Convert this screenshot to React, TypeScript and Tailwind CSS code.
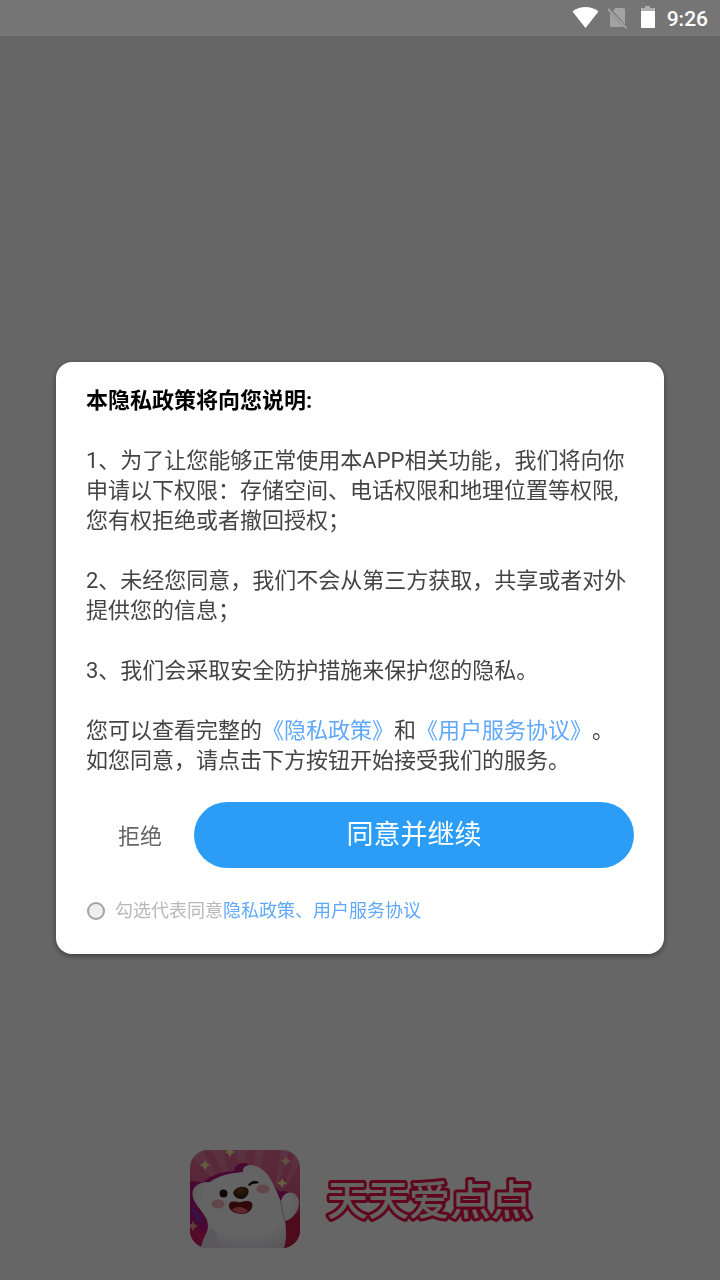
import { useState } from 'react';

function StatusBar() {
  return (
    <header className="relative z-20 flex h-9 items-center justify-end bg-[#757575] pr-3 text-white">
      {/* Wifi */}
      <svg className="mr-2 h-6 w-7" viewBox="0 0 28 24" fill="currentColor">
        <path d="M14.500 22 1.500 5.500C5 2.500 9.500 1 14.500 1s9.500 1.500 13 4.500Z" />
      </svg>
      {/* No SIM */}
      <svg className="mr-3 h-6 w-5" viewBox="0 0 20 24">
        <path fill="#a3a3a3" d="M8.500 2H16.500q1.500 0 1.500 1.500v14.700L6 5ZM3 7 16.500 21H4.500Q3 21 3 19.500Z" />
        <path stroke="#a3a3a3" strokeWidth="1.800" d="M1 3 19.500 22" />
      </svg>
      {/* Battery */}
      <svg className="mr-3 h-6 w-4" viewBox="0 0 16 24">
        <path fill="#b0b0b0" d="M6 0h5v2h5v4H2V2h4Z" />
        <path fill="currentColor" d="M2 5h14v17H2Z" />
      </svg>
      <span className="pt-px text-[21px] leading-6 font-medium">9:26</span>
    </header>
  );
}

function BearLogo() {
  return (
    <svg className="h-[98px] w-[110px] rounded-[18px]" viewBox="0 0 110 98">
      <defs>
        <linearGradient id="sky" x1="0" y1="0" x2="0" y2="1">
          <stop offset="0" stopColor="#e06a94" />
          <stop offset="0.400" stopColor="#dc5c88" />
          <stop offset="0.650" stopColor="#cc3562" />
          <stop offset="1" stopColor="#b81640" />
        </linearGradient>
        <radialGradient id="fur" cx="0.500" cy="0.450" r="0.620">
          <stop offset="0.650" stopColor="#fafafa" />
          <stop offset="1" stopColor="#dcd8e0" />
        </radialGradient>
        <radialGradient id="nose" cx="0.500" cy="0.300" r="0.700">
          <stop offset="0" stopColor="#74481f" />
          <stop offset="1" stopColor="#2d1608" />
        </radialGradient>
        <path id="spark" d="M0-5.500Q.9-.9 5.500 0 .9.900 0 5.500-.9.900-5.500 0-.9-.9 0-5.500Z" />
      </defs>
      <rect width="110" height="98" fill="url(#sky)" />
      {/* Rays */}
      <path fill="#fff" fillOpacity="0.140" d="M50 60 0 4V0h12ZM50 60 22 0h10ZM54 60 46 0h10ZM58 60 66 0h9ZM84 46 91 0h9ZM92 44 106 0h4v12Z" />
      {/* Hood */}
      <path fill="#b3157e" d="M0 31 13 32Q27 21 44 21 46 12 55 13L67 18 90 42Q95 39 101 44L96 72 16 90 0 78Z" />
      <path fill="#8d2fb0" d="M0 57 8 62 14 74 6 70Z" />
      <path fill="#cf1d62" d="M0 72 16 84 11 98H0Z" />
      <path fill="#c01c46" d="M92 71 110 62V98H92Z" />
      {/* Body */}
      <path fill="url(#fur)" d="M3 47C0 37 10 31 20 32 29 25 42 23 53 22 52 15 61 13 68 17 78 21 84 34 91 52 92 44 99 40 105 44 112 49 109 63 100 69Q97 71 95 71C97 83 96 91 94 98H11C13 88 18 82 18 76 18 64 5 57 3 47Z" />
      <path fill="#e2dde6" d="M11 98C14 85 18 79 22 79 28 82 30 92 28 98Z" />
      <path fill="none" stroke="#cdc2d0" strokeWidth="1.500" d="M91 52Q92 62 95 71" />
      {/* Face */}
      <ellipse cx="28" cy="54" rx="6.500" ry="4.500" fill="#f5b2ba" />
      <ellipse cx="73" cy="39" rx="6.500" ry="4.500" fill="#f5b2ba" />
      <circle cx="33.500" cy="43.500" r="4" fill="#2a160e" />
      <path fill="#2a160e" d="M58 35C60 31 67 29 69 33 66 34 62 33 60 36Z" />
      <path fill="url(#nose)" d="M43 43C44 38 52 35 57 38 61 41 57 49 51 49 47 49 44 46 43 43Z" />
      <path fill="#7b141c" d="M39 54C42 49 48 53 51 52 55 51 60 50 62 53 64 58 59 64 52 64 44 64 38 60 39 54Z" />
      <path fill="#e4686f" d="M42 60C46 55 54 57 58 61 54 65 46 64 42 60Z" />
      {/* Sparkles */}
      <g fill="#f8f29a">
        <use href="#spark" x="15" y="15" />
        <use href="#spark" x="40" y="2" />
        <use href="#spark" x="96" y="11" opacity="0.700" />
        <use href="#spark" x="92" y="33" />
        <use href="#spark" x="3" y="76" opacity="0.600" />
      </g>
    </svg>
  );
}

function Brand() {
  return (
    <footer className="mt-auto flex items-center justify-center gap-5 pb-8">
      <BearLogo />
      <h1>
        <svg className="h-12 w-[210px] overflow-visible" viewBox="0 0 210 48">
          <text
            x="7"
            y="40"
            className="fill-[#f8f8f0] stroke-[#f00d4c] stroke-6 text-[41px] font-medium [paint-order:stroke]"
            strokeLinejoin="round"
          >
            天天爱点点
          </text>
        </svg>
      </h1>
    </footer>
  );
}

function PrivacyDialog() {
  const [agreed, setAgreed] = useState(false);

  return (
    <div className="fixed inset-0 z-10 flex items-center justify-center bg-black/60 px-14 pt-9">
      <section
        role="dialog"
        aria-labelledby="privacy-title"
        className="w-full rounded-2xl bg-white px-[30px] pt-6 pb-[30px] text-[22px] leading-[30px] text-[#444444] shadow-[0_2px_6px_rgba(0,0,0,0.4)] [text-spacing-trim:space-all]"
      >
        <h2 id="privacy-title" className="mb-[30px] font-bold text-black">
          本隐私政策将向您说明:
        </h2>
        <div className="flex flex-col gap-[30px]">
          <p>1、为了让您能够正常使用本APP相关功能，我们将向你申请以下权限：存储空间、电话权限和地理位置等权限,您有权拒绝或者撤回授权；</p>
          <p>2、未经您同意，我们不会从第三方获取，共享或者对外提供您的信息；</p>
          <p>3、我们会采取安全防护措施来保护您的隐私。</p>
          <p>
            您可以查看完整的
            <a href="#privacy" className="text-[#5fa8fb]">《隐私政策》</a>
            和
            <a href="#terms" className="text-[#5fa8fb]">《用户服务协议》</a>
            。
            <br />
            如您同意，请点击下方按钮开始接受我们的服务。
          </p>
        </div>

        {/* Actions */}
        <div className="mt-[26px] flex items-center">
          <button type="button" className="px-8 pt-1 text-[#666666]">拒绝</button>
          <button type="button" className="h-[66px] flex-1 rounded-full bg-[#2c9df7] text-[27px] text-white">
            同意并继续
          </button>
        </div>

        {/* Consent */}
        <div className="mt-[30px] flex items-center text-[18px] leading-[26px] text-[#b8b8b8]">
          <input
            id="agree"
            type="checkbox"
            checked={agreed}
            onChange={(e) => setAgreed(e.target.checked)}
            className="mx-px h-[18px] w-[18px] appearance-none rounded-full border-2 border-[#a3a3a3] bg-[#eeeeee] checked:bg-[#2c9df7]"
          />
          <label htmlFor="agree" className="ml-[9px]">勾选代表同意</label>
          <a href="#agreements" className="text-[#5fa8fb]">隐私政策、用户服务协议</a>
        </div>
      </section>
    </div>
  );
}

export default function App() {
  return (
    <div className="flex min-h-screen flex-col bg-white font-[Roboto,'Noto_Sans_CJK_SC',sans-serif]" lang="zh-CN">
      <StatusBar />
      <Brand />
      <PrivacyDialog />
    </div>
  );
}
